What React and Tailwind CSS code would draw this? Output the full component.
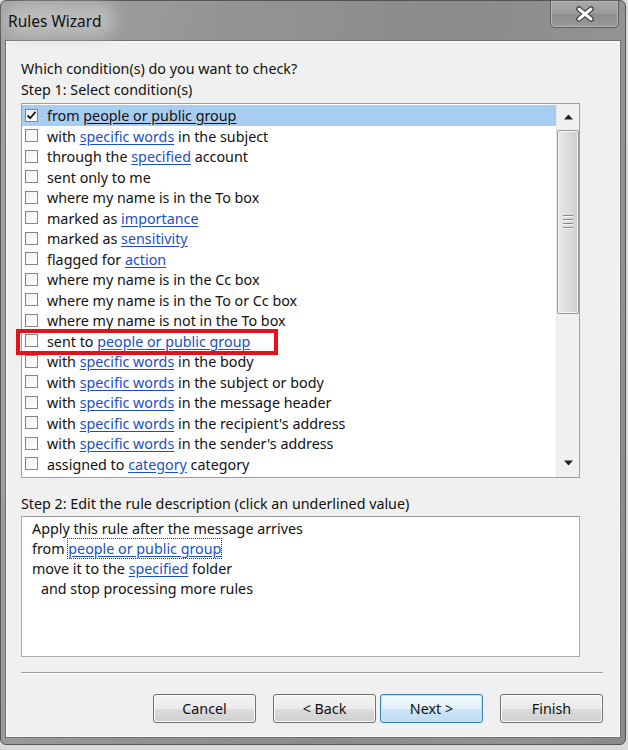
import React from "react";

const L = (t) => ({ link: t });

const rows = [
  ["from ", L("people or public group")],
  ["with ", L("specific words"), " in the subject"],
  ["through the ", L("specified"), " account"],
  ["sent only to me"],
  ["where my name is in the To box"],
  ["marked as ", L("importance")],
  ["marked as ", L("sensitivity")],
  ["flagged for ", L("action")],
  ["where my name is in the Cc box"],
  ["where my name is in the To or Cc box"],
  ["where my name is not in the To box"],
  ["sent to ", L("people or public group")],
  ["with ", L("specific words"), " in the body"],
  ["with ", L("specific words"), " in the subject or body"],
  ["with ", L("specific words"), " in the message header"],
  ["with ", L("specific words"), " in the recipient's address"],
  ["with ", L("specific words"), " in the sender's address"],
  ["assigned to ", L("category"), " category"],
];

function Checkbox({ checked }) {
  return (
    <div className="w-[13px] h-[13px] border border-[#858585] bg-gradient-to-br from-[#f0f0f0] to-white flex items-center justify-center shrink-0">
      {checked && (
        <svg width="11" height="11" viewBox="0 0 11 11">
          <path d="M1.5 5.5 L4.2 8.2 L9.5 1.8" fill="none" stroke="#111" strokeWidth="1.8" />
        </svg>
      )}
    </div>
  );
}

function Row({ parts, idx }) {
  const selected = idx === 0;
  return (
    <div className={`h-[20.5px] flex items-center pl-[3px] gap-[9px] ${selected ? "bg-[#a9cdf1]" : ""}`}>
      <Checkbox checked={selected} />
      <span className="whitespace-pre text-[#111] pt-[1px]">
        {parts.map((p, i) =>
          typeof p === "string" ? (
            <span key={i}>{p}</span>
          ) : (
            <span key={i} className={`underline underline-offset-[2px] ${selected ? "text-[#111]" : "text-[#1c4fc4]"}`}>
              {p.link}
            </span>
          )
        )}
      </span>
    </div>
  );
}

function Button({ children, focused }) {
  return (
    <div
      className={`w-[103px] h-[29px] rounded-[3px] border flex items-center justify-center text-[#111] ${
        focused
          ? "border-[#3c7fb1] bg-[linear-gradient(#f0f8fd_0%,#e3f1fb_50%,#cfe6f6_50%,#bddcf2_100%)] shadow-[inset_0_0_0_1px_#c5e3f7]"
          : "border-[#707070] bg-[linear-gradient(#f2f2f2_0%,#ebebeb_50%,#dddddd_50%,#cfcfcf_100%)] shadow-[inset_0_0_0_1px_#fbfbfb]"
      }`}
    >
      {children}
    </div>
  );
}

export default function App() {
  return (
    <div className="w-[628px] h-[750px] bg-[#d9d9d9] font-['Noto_Sans',sans-serif] text-[14.3px] overflow-hidden">
      <div className="w-[626px] h-[745px] rounded-[6px] border border-[#555] bg-[linear-gradient(100deg,#a3a3a3_0%,#949494_30%,#8b8b8b_60%,#939393_85%,#898989_100%)] flex flex-col px-[4px]">
        {/* title bar */}
        <div className="relative h-[39px] shrink-0">
          <div className="absolute left-[0px] top-[3px] w-[110px] h-[32px] rounded-full bg-[#c4c4c4] blur-[8px] opacity-80" />
          <div className="absolute left-[3px] top-[9px] text-[15.5px] text-[#111] leading-[22px] font-['Noto_Sans',sans-serif]">
            Rules Wizard
          </div>
          <div className="absolute right-[2px] top-[-1px] w-[69px] h-[28px] rounded-b-[5px] border border-[#5e5e5e] shadow-[inset_0_0_0_1px_#b5b5b5] bg-[linear-gradient(#a9a9a9,#9a9a9a_50%,#8d8d8d_50%,#9b9b9b)] flex items-center justify-center">
            <svg width="20" height="16" viewBox="0 0 20 16">
              <path d="M4 3 L16 13 M16 3 L4 13" stroke="#3a3a3a" strokeWidth="5.5" strokeLinecap="round" />
              <path d="M4 3 L16 13 M16 3 L4 13" stroke="#ffffff" strokeWidth="3" strokeLinecap="round" />
            </svg>
          </div>
        </div>

        {/* content */}
        <div className="w-[616px] border border-[#6f6f6f] bg-[#f0f0f0] shadow-[inset_0_0_0_1px_#fafafa] pl-[15px] pr-[17px] pt-[17px] pb-[14px] flex flex-col text-[#111]">
          <div className="h-[21px] leading-[21px]">Which condition(s) do you want to check?</div>
          <div className="h-[21px] leading-[21px]">Step 1: Select condition(s)</div>

          {/* condition list */}
          <div className="relative mt-[3px] w-[559px] h-[375px] border border-[#a0a0a0] bg-white flex">
            <div className="flex-1 pt-[1px]">
              {rows.map((r, i) => (
                <Row key={i} parts={r} idx={i} />
              ))}
            </div>
            {/* scrollbar */}
            <div className="w-[23px] bg-[#f0f0f0] border-l border-[#e6e6e6] flex flex-col items-center">
              <div className="h-[26px] w-full flex items-center justify-center">
                <svg width="9" height="6" viewBox="0 0 9 6">
                  <path d="M0 5.5 L4.5 0.5 L9 5.5 Z" fill="#222" />
                </svg>
              </div>
              <div className="w-[22px] h-[184px] rounded-[2px] border border-[#979797] bg-[linear-gradient(90deg,#e8e8e8,#dadada_60%,#cdcdcd)] shadow-[inset_0_0_0_1px_#f5f5f5] flex items-center justify-center">
                <div className="flex flex-col gap-[2px]">
                  <div className="w-[10px] h-[2px] bg-[#8a8a8a] border-b border-[#f5f5f5]" />
                  <div className="w-[10px] h-[2px] bg-[#8a8a8a] border-b border-[#f5f5f5]" />
                  <div className="w-[10px] h-[2px] bg-[#8a8a8a] border-b border-[#f5f5f5]" />
                  <div className="w-[10px] h-[2px] bg-[#8a8a8a] border-b border-[#f5f5f5]" />
                </div>
              </div>
              <div className="flex-1" />
              <div className="h-[24px] w-full flex items-center justify-center pb-[4px]">
                <svg width="9" height="6" viewBox="0 0 9 6">
                  <path d="M0 0.5 L4.5 5.5 L9 0.5 Z" fill="#222" />
                </svg>
              </div>
            </div>
            {/* red highlight box */}
            <div className="absolute left-[-6px] top-[225px] w-[262px] h-[26px] border-[4px] border-[#e3111b]" />
          </div>

          <div className="mt-[15px] h-[21px] leading-[21px]">Step 2: Edit the rule description (click an underlined value)</div>

          {/* description box */}
          <div className="mt-[2px] w-[559px] h-[141px] border border-[#abadb3] border-t-[#9a9a9a] bg-white pl-[10px] pt-[2px]">
            <div className="h-[20px] leading-[20px]">Apply this rule after the message arrives</div>
            <div className="h-[20px] leading-[20px] whitespace-pre">
              from <span className="outline outline-1 outline-dotted outline-[#333] text-[#1c4fc4] underline underline-offset-[2px]">people or public group</span>
            </div>
            <div className="h-[20px] leading-[20px] whitespace-pre">
              move it to the <span className="text-[#1c4fc4] underline underline-offset-[2px]">specified</span> folder
            </div>
            <div className="h-[20px] leading-[20px] pl-[9px]">and stop processing more rules</div>
          </div>

          {/* separator */}
          <div className="mt-[15px] w-[582px] h-[2px] border-t border-[#a0a0a0] border-b border-b-white" />

          {/* buttons */}
          <div className="mt-[20px] flex justify-end">
            <Button>Cancel</Button>
            <div className="w-[17px]" />
            <Button>&lt; Back</Button>
            <div className="w-[4px]" />
            <Button focused>Next &gt;</Button>
            <div className="w-[17px]" />
            <Button>Finish</Button>
          </div>
        </div>
      </div>
    </div>
  );
}
